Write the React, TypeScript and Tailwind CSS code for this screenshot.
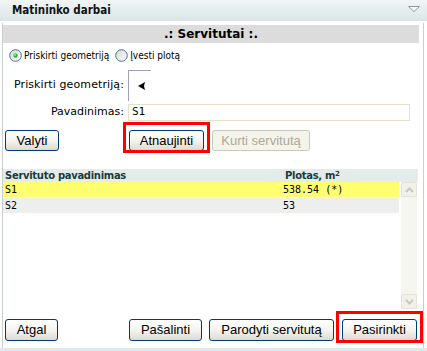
import clsx from 'clsx';
import type { ReactNode } from 'react';

const tahoma = "font-['DejaVu_Sans_Condensed','Liberation_Sans',sans-serif]";
const verdana = "font-['DejaVu_Sans',Verdana,sans-serif]";
const arial = "font-['Liberation_Sans',Arial,sans-serif]";
const mono = "font-['DejaVu_Sans_Mono','Liberation_Mono',monospace]";

function XpButton({
  children,
  className,
  disabled,
  marked,
}: {
  children: ReactNode;
  className?: string;
  disabled?: boolean;
  marked?: boolean;
}) {
  return (
    <div className={clsx('relative shrink-0', className)}>
      <button
        type="button"
        disabled={disabled}
        className={clsx(
          arial,
          'h-full w-full rounded-[3px] border text-[13px] leading-none',
          disabled
            ? 'border-[#cac8bb] bg-[#f5f4ea] text-[#aca899]'
            : 'border-[#003c74] bg-gradient-to-b from-white via-[#f5f4ef] to-[#dedad0] text-black',
        )}
      >
        {children}
      </button>
      {marked && (
        <span className="pointer-events-none absolute -inset-x-[6px] -inset-y-[5px] border-[3px] border-[#f00]" />
      )}
    </div>
  );
}

function Radio({ checked, label }: { checked?: boolean; label: string }) {
  return (
    <label className="flex items-center gap-[2px]">
      <svg width="13" height="13" viewBox="0 0 13 13">
        <defs>
          <linearGradient id={checked ? 'rg1' : 'rg2'} x1="0" y1="0" x2="1" y2="1">
            <stop offset="0" stopColor="#d6d6d0" />
            <stop offset="1" stopColor="#ffffff" />
          </linearGradient>
        </defs>
        <circle cx="6.5" cy="6.5" r="5.8" fill={`url(#${checked ? 'rg1' : 'rg2'})`} stroke="#4e6f97" />
        {checked && <circle cx="6.5" cy="6.5" r="2.2" fill="#34b03c" />}
        {checked && <circle cx="6" cy="6" r="0.9" fill="#a8ecaa" />}
      </svg>
      <span className={clsx(tahoma, 'text-[10px] text-black')}>{label}</span>
    </label>
  );
}

function ScrollBtn({ up }: { up?: boolean }) {
  return (
    <div className="flex h-[15px] w-[16px] items-center justify-center rounded-[2px] border border-[#e4e3da] bg-[#f1f0e9]">
      <svg width="9" height="6" viewBox="0 0 9 6">
        <polyline
          points={up ? '1,5 4.5,1.5 8,5' : '1,1 4.5,4.5 8,1'}
          fill="none"
          stroke="#c9c8bf"
          strokeWidth="2"
        />
      </svg>
    </div>
  );
}

const rows = [
  { name: 'S1', area: '538.54 (*)', selected: true },
  { name: 'S2', area: '53', selected: false },
];

export default function App() {
  return (
    <div className="flex h-[351px] w-[427px] flex-col overflow-hidden bg-white">
      <div className="flex h-[21px] shrink-0 items-center justify-between bg-gradient-to-b from-[#f1f5f5] to-[#dbe5e6] pl-[12px] pr-[7px]">
        <span className={clsx(tahoma, 'text-[11.5px] font-bold text-[#111]')}>Matininko darbai</span>
        <svg width="12" height="6" viewBox="0 0 12 6" className="mb-[4px]">
          <polygon points="0.5,0.5 11.5,0.5 6,5.5" fill="#fbfcfc" stroke="#8c9c9e" />
        </svg>
      </div>

      <div className="mt-[2px] ml-[2px] flex w-[422px] flex-1 flex-col border-x border-[#c9cfcf] pt-[2px]">
        <div
          className={clsx(
            verdana,
            'flex h-[18px] w-[416px] items-center justify-center bg-[#dcdcdc] text-[12px] font-bold text-black',
          )}
        >
          .: Servitutai :.
        </div>

        <div className="mt-[6px] ml-[6px] flex h-[13px] items-center gap-[6px]">
          <Radio checked label="Priskirti geometriją" />
          <Radio label="Įvesti plotą" />
        </div>

        <div className="mt-[8px] flex h-[31px] items-center">
          <span className={clsx(verdana, 'w-[121px] text-right text-[11px] tracking-[0.1px] text-black')}>
            Priskirti geometriją:
          </span>
          <div className="ml-[4px] flex h-full w-[23px] items-center border-l border-t border-[#a19fbb] pl-[9px]">
            <svg width="7" height="8" viewBox="0 0 7 8">
              <polygon points="0,4 7,0 6,4 7,8" fill="#000" />
            </svg>
          </div>
        </div>

        <div className="mt-[3px] flex h-[17px] items-center">
          <span className={clsx(verdana, 'w-[121px] text-right text-[11px] text-black')}>Pavadinimas:</span>
          <div
            className={clsx(
              mono,
              'ml-[4px] flex h-full w-[282px] items-center border border-[#e5e2c9] pl-[3px] text-[11px] text-black',
            )}
          >
            S1
          </div>
        </div>

        <div className="mt-[6px] ml-[2px] flex h-[21px]">
          <XpButton className="w-[54px]">Valyti</XpButton>
          <XpButton className="ml-[70px] w-[75px]" marked>
            Atnaujinti
          </XpButton>
          <XpButton className="ml-[8px] w-[98px]" disabled>
            Kurti servitutą
          </XpButton>
        </div>

        <div
          className={clsx(
            verdana,
            'mt-[21px] flex h-[13px] w-[415px] items-center bg-[#e4ebeb] text-[10px] font-bold tracking-[-0.3px] text-[#1b3b3d]',
          )}
        >
          <span className="w-[280px] pl-[2px]">Servituto pavadinimas</span>
          <span className="pl-[2px]">
            Plotas, m<sup className="text-[7px]">2</sup>
          </span>
        </div>

        <div className="flex h-[127px] w-[415px]">
          <div className={clsx(mono, 'flex w-[396px] flex-col text-[10px] text-black')}>
            {rows.map((r) => (
              <div
                key={r.name}
                className={clsx(
                  'mt-px flex h-[15px] items-center first:mt-0',
                  r.selected ? 'bg-[#ffff70]' : 'bg-[#eeeeec]',
                )}
              >
                <span className="w-[280px] pl-[2px]">{r.name}</span>
                <span>{r.area}</span>
              </div>
            ))}
          </div>
          <div className="ml-[2px] flex w-[16px] flex-col justify-between bg-[#f6f6f1]">
            <ScrollBtn up />
            <ScrollBtn />
          </div>
        </div>

        <div className="mt-[7px] ml-[2px] flex h-[22px]">
          <XpButton className="w-[53px]">Atgal</XpButton>
          <XpButton className="ml-auto w-[73px]">Pašalinti</XpButton>
          <XpButton className="ml-[7px] w-[125px]">Parodyti servitutą</XpButton>
          <XpButton className="mr-[6px] ml-[8px] w-[75px]" marked>
            Pasirinkti
          </XpButton>
        </div>
      </div>

      <div className="h-[3px] shrink-0 bg-[#dfe8ea]" />
    </div>
  );
}
